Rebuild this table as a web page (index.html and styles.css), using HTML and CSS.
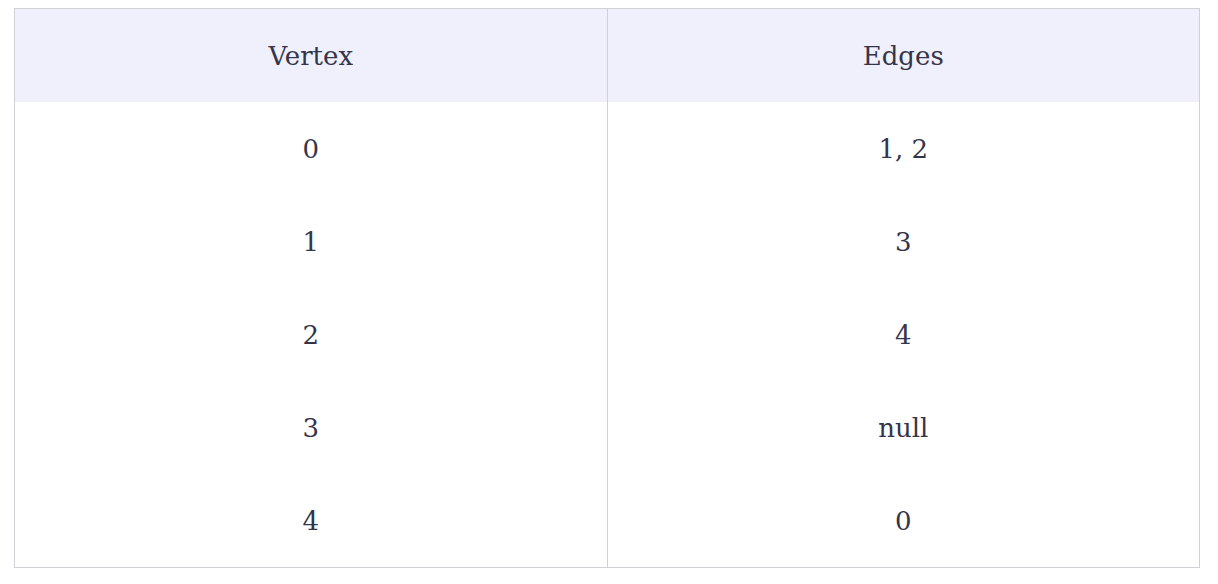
FILE: index.html
```html
<!DOCTYPE html>
<html>
<head>
<meta charset="utf-8">
<link rel="stylesheet" href="styles.css">
</head>
<body>
<div class="wrap">
<table class="graph">
<thead>
<tr><th>Vertex</th><th>Edges</th></tr>
</thead>
<tbody>
<tr><td>0</td><td>1, 2</td></tr>
<tr><td>1</td><td>3</td></tr>
<tr><td>2</td><td>4</td></tr>
<tr><td>3</td><td>null</td></tr>
<tr><td>4</td><td>0</td></tr>
</tbody>
</table>
</div>
</body>
</html>
```

FILE: styles.css
```css
html, body {
  margin: 0;
  padding: 0;
  background: #ffffff;
}
.wrap {
  padding: 8px 18px 0 14px;
}
.graph {
  width: 1186px;
  border-collapse: collapse;
  table-layout: fixed;
  border: 1px solid #d2d2d6;
  font-family: "DejaVu Serif", "Liberation Serif", serif;
  font-size: 26px;
  color: #34354a;
}
.graph th, .graph td {
  height: 93px;
  padding: 0;
  text-align: center;
  vertical-align: middle;
  font-weight: normal;
}
.graph th + th, .graph td + td {
  border-left: 1px solid #d2d2d6;
}
.graph thead th {
  background: #f0f0fd;
}
```
